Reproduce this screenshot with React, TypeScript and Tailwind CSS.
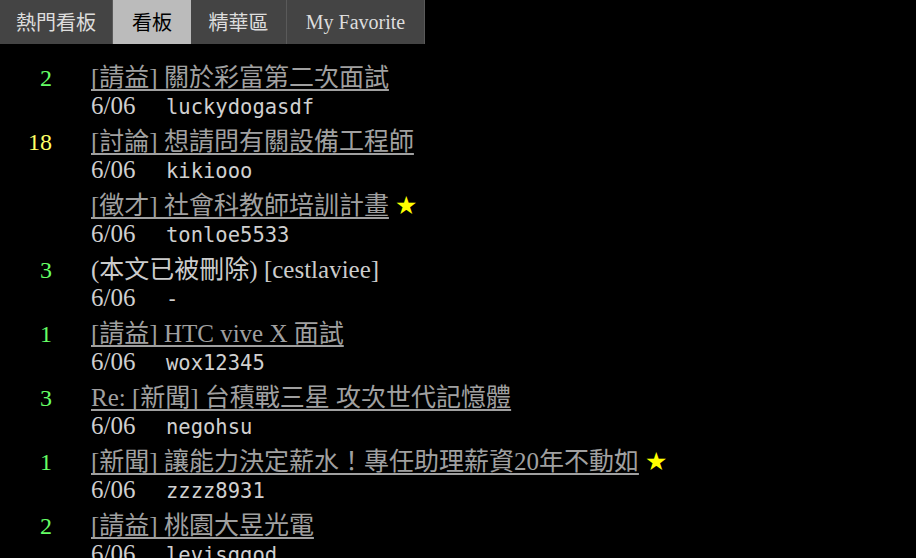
import React from "react";

type Post = {
  n?: string;
  nColor?: string;
  title: string;
  link: boolean;
  star?: boolean;
  author: string;
};

const posts: Post[] = [
  { n: "2", nColor: "text-[#66ff66]", title: "[請益] 關於彩富第二次面試", link: true, author: "luckydogasdf" },
  { n: "18", nColor: "text-[#ffff66]", title: "[討論] 想請問有關設備工程師", link: true, author: "kikiooo" },
  { title: "[徵才] 社會科教師培訓計畫", link: true, star: true, author: "tonloe5533" },
  { n: "3", nColor: "text-[#66ff66]", title: "(本文已被刪除) [cestlaviee]", link: false, author: "-" },
  { n: "1", nColor: "text-[#66ff66]", title: "[請益] HTC vive X 面試", link: true, author: "wox12345" },
  { n: "3", nColor: "text-[#66ff66]", title: "Re: [新聞] 台積戰三星 攻次世代記憶體", link: true, author: "negohsu" },
  { n: "1", nColor: "text-[#66ff66]", title: "[新聞] 讓能力決定薪水！專任助理薪資20年不動如", link: true, star: true, author: "zzzz8931" },
  { n: "2", nColor: "text-[#66ff66]", title: "[請益] 桃園大昱光電", link: true, author: "levisggod" },
];

const serif = "font-['Liberation_Serif','Noto_Sans_CJK_TC',serif]";

export default function App() {
  return (
    <div className="h-[558px] w-[916px] overflow-hidden bg-black">
      <div className="flex h-[44px] w-[425px] bg-[#444444]">
        <div className="flex w-[113px] items-center justify-center border-r border-[#5a5a5a] font-['Noto_Sans_CJK_TC',sans-serif] text-[20px] text-[#dddddd]">
          熱門看板
        </div>
        <div className="flex w-[78px] items-center justify-center bg-[#bbbbbb] font-['Noto_Sans_CJK_TC',sans-serif] text-[20px] text-black">
          看板
        </div>
        <div className="flex w-[96px] items-center justify-center border-r border-[#5a5a5a] font-['Noto_Sans_CJK_TC',sans-serif] text-[20px] text-[#dddddd]">
          精華區
        </div>
        <div className={`flex w-[138px] items-center justify-center border-r border-[#5a5a5a] ${serif} text-[20px] text-[#dddddd]`}>
          My Favorite
        </div>
      </div>
      <div className="pt-4">
        {posts.map((p, i) => (
          <div key={i} className="flex h-[64px] py-1">
            <div className={`h-[28px] w-[52px] shrink-0 text-right ${serif} text-[24px] leading-[28px] ${p.nColor ?? ""}`}>
              {p.n ?? ""}
            </div>
            <div className="ml-[39px] flex flex-col">
              <div className={`${serif} h-[28px] whitespace-nowrap text-[25px] leading-[28px]`}>
                {p.link ? (
                  <span className="text-[#a0a0a0] underline decoration-[#a0a0a0] underline-offset-[3px]">{p.title}</span>
                ) : (
                  <span className="text-[#cccccc]">{p.title}</span>
                )}
                {p.star && <span className="ml-[6px] font-['DejaVu_Sans',sans-serif] text-[25px] leading-[28px] text-[#ffff00]">★</span>}
              </div>
              <div className="flex h-[28px] items-baseline text-[#d0d0d0]">
                <span className={`w-[75px] ${serif} text-[25px] leading-[28px]`}>6/06</span>
                <span className="font-['DejaVu_Sans_Mono',monospace] text-[20.5px] leading-[28px]">{p.author}</span>
              </div>
            </div>
          </div>
        ))}
      </div>
    </div>
  );
}
